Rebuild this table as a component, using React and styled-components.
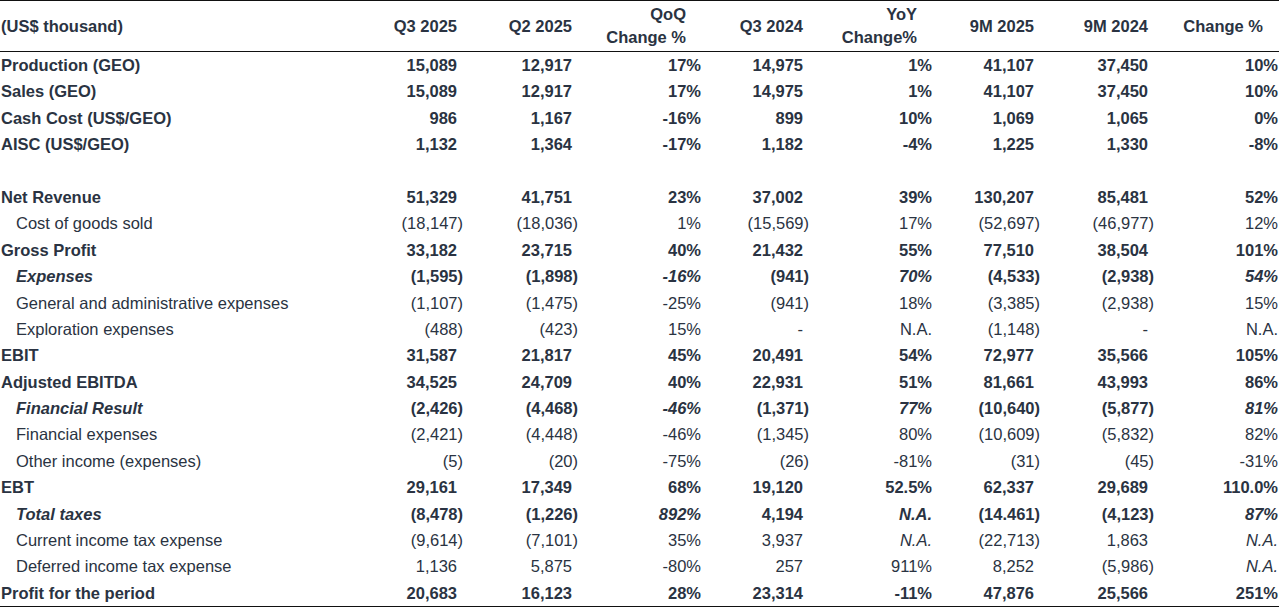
import React from "react";
import styled, { createGlobalStyle } from "styled-components";

const GlobalStyle = createGlobalStyle`
  body {
    margin: 0;
    background: #ffffff;
  }
`;

const COLS = "350px 113px 115px 123px 108px 123px 108px 114px 1fr";
const PCT = [2, 4, 7];

const Table = styled.div`
  width: 1279px;
  font-family: "Liberation Sans", Arial, sans-serif;
  font-size: 16.5px;
  color: #2a3342;
  border-top: 1px solid #111;
  border-bottom: 1px solid #111;
`;

const HeadRow = styled.div`
  display: grid;
  grid-template-columns: ${COLS};
  height: 50px;
  border-bottom: 1px solid #111;
  font-weight: bold;
  line-height: 23px;
`;

const HeadCell = styled.div`
  display: flex;
  flex-direction: column;
  justify-content: center;
  align-items: ${(p) => (p.$left ? "flex-start" : "flex-end")};
  padding-left: ${(p) => (p.$left ? "1px" : "0")};
  padding-right: ${(p) => p.$pad}px;
  white-space: nowrap;
`;

const Row = styled.div`
  display: grid;
  grid-template-columns: ${COLS};
  height: 26.4px;
  line-height: 26.4px;
  white-space: nowrap;
  font-weight: ${(p) => (p.$kind === "sub" ? "normal" : "bold")};
`;

const Label = styled.div`
  padding-left: ${(p) => (p.$kind === "bold" ? "1px" : "16px")};
  font-style: ${(p) => (p.$kind === "subtotal" ? "italic" : "normal")};
`;

const Cell = styled.div`
  text-align: right;
  padding-right: ${(p) => p.$pad}px;
  font-style: ${(p) => (p.$italic ? "italic" : "normal")};
`;

const heads = [
  ["Q3 2025"],
  ["Q2 2025"],
  ["QoQ", "Change %"],
  ["Q3 2024"],
  ["YoY", "Change%"],
  ["9M 2025"],
  ["9M 2024"],
  ["Change %"],
];

const NA = { t: "N.A.", i: true };

const rows = [
  { label: "Production (GEO)", kind: "bold", v: ["15,089", "12,917", "17%", "14,975", "1%", "41,107", "37,450", "10%"] },
  { label: "Sales (GEO)", kind: "bold", v: ["15,089", "12,917", "17%", "14,975", "1%", "41,107", "37,450", "10%"] },
  { label: "Cash Cost (US$/GEO)", kind: "bold", v: ["986", "1,167", "-16%", "899", "10%", "1,069", "1,065", "0%"] },
  { label: "AISC (US$/GEO)", kind: "bold", v: ["1,132", "1,364", "-17%", "1,182", "-4%", "1,225", "1,330", "-8%"] },
  { blank: true },
  { label: "Net Revenue", kind: "bold", v: ["51,329", "41,751", "23%", "37,002", "39%", "130,207", "85,481", "52%"] },
  { label: "Cost of goods sold", kind: "sub", v: ["(18,147)", "(18,036)", "1%", "(15,569)", "17%", "(52,697)", "(46,977)", "12%"] },
  { label: "Gross Profit", kind: "bold", v: ["33,182", "23,715", "40%", "21,432", "55%", "77,510", "38,504", "101%"] },
  { label: "Expenses", kind: "subtotal", v: ["(1,595)", "(1,898)", "-16%", "(941)", "70%", "(4,533)", "(2,938)", "54%"] },
  { label: "General and administrative expenses", kind: "sub", v: ["(1,107)", "(1,475)", "-25%", "(941)", "18%", "(3,385)", "(2,938)", "15%"] },
  { label: "Exploration expenses", kind: "sub", v: ["(488)", "(423)", "15%", "-", "N.A.", "(1,148)", "-", "N.A."] },
  { label: "EBIT", kind: "bold", v: ["31,587", "21,817", "45%", "20,491", "54%", "72,977", "35,566", "105%"] },
  { label: "Adjusted EBITDA", kind: "bold", v: ["34,525", "24,709", "40%", "22,931", "51%", "81,661", "43,993", "86%"] },
  { label: "Financial Result", kind: "subtotal", v: ["(2,426)", "(4,468)", "-46%", "(1,371)", "77%", "(10,640)", "(5,877)", "81%"] },
  { label: "Financial expenses", kind: "sub", v: ["(2,421)", "(4,448)", "-46%", "(1,345)", "80%", "(10,609)", "(5,832)", "82%"] },
  { label: "Other income (expenses)", kind: "sub", v: ["(5)", "(20)", "-75%", "(26)", "-81%", "(31)", "(45)", "-31%"] },
  { label: "EBT", kind: "bold", v: ["29,161", "17,349", "68%", "19,120", "52.5%", "62,337", "29,689", "110.0%"] },
  { label: "Total taxes", kind: "subtotal", v: ["(8,478)", "(1,226)", "892%", "4,194", "N.A.", "(14.461)", "(4,123)", "87%"] },
  { label: "Current income tax expense", kind: "sub", v: ["(9,614)", "(7,101)", "35%", "3,937", NA, "(22,713)", "1,863", NA] },
  { label: "Deferred income tax expense", kind: "sub", v: ["1,136", "5,875", "-80%", "257", "911%", "8,252", "(5,986)", NA] },
  { label: "Profit for the period", kind: "bold", v: ["20,683", "16,123", "28%", "23,314", "-11%", "47,876", "25,566", "251%"] },
];

function cellProps(val, i, kind) {
  const text = typeof val === "string" ? val : val.t;
  const isPct = PCT.includes(i);
  let pad = 0;
  if (!isPct && !text.endsWith(")")) pad = 6;
  if (i === 7) pad += 1;
  const italic = (typeof val === "object" && val.i) || (kind === "subtotal" && isPct);
  return { text, pad, italic };
}

export default function App() {
  return (
    <>
      <GlobalStyle />
      <Table>
        <HeadRow>
          <HeadCell $left>(US$ thousand)</HeadCell>
          {heads.map((h, i) => (
            <HeadCell key={i} $pad={(PCT.includes(i) ? 15 : 6) + (i === 7 ? 1 : 0)}>
              {h.map((line) => (
                <span key={line}>{line}</span>
              ))}
            </HeadCell>
          ))}
        </HeadRow>
        {rows.map((r, idx) =>
          r.blank ? (
            <Row key={idx} />
          ) : (
            <Row key={idx} $kind={r.kind}>
              <Label $kind={r.kind}>{r.label}</Label>
              {r.v.map((val, i) => {
                const { text, pad, italic } = cellProps(val, i, r.kind);
                return (
                  <Cell key={i} $pad={pad} $italic={italic}>
                    {text}
                  </Cell>
                );
              })}
            </Row>
          )
        )}
      </Table>
    </>
  );
}
